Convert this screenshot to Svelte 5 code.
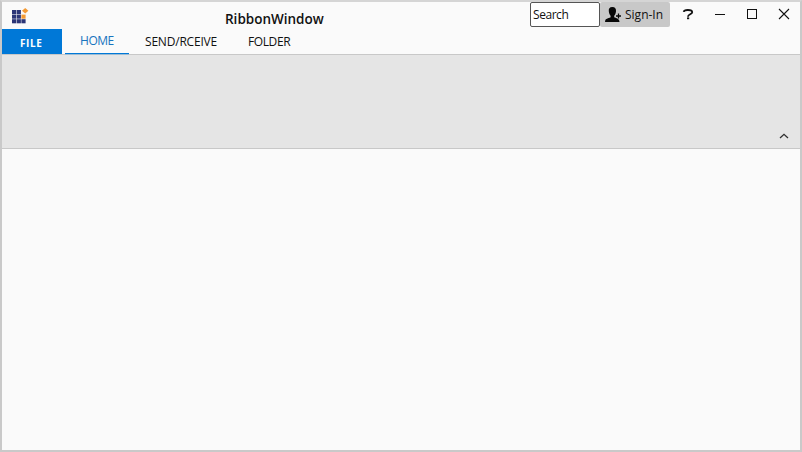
<script>
  const tabs = [
    { label: 'HOME', active: true, cls: 'home' },
    { label: 'SEND/RCEIVE', active: false, cls: 'send' },
    { label: 'FOLDER', active: false, cls: 'folder' }
  ];
  const cells = [0, 1, 2].flatMap((r) => [0, 1, 2].map((c) => ({ r, c })));
</script>

<div class="window">
  <header>
    <svg class="logo" width="18" height="16" viewBox="0 0 18 16">
      {#each cells as { r, c }}
        {#if !(r === 0 && c === 2)}
          <rect x={c * 4.7} y={2 + r * 4.6} width="4.2" height="4.1" fill={r === 1 && c === 2 ? '#f39a35' : '#2b3577'} />
        {/if}
      {/each}
      <path d="M13.2 0 16.4 2.7 13.2 5.5 10 2.7Z" fill="#f39a35" />
    </svg>
    <h1>RibbonWindow</h1>
    <div class="search"><span>Search</span></div>
    <button class="sign">
      <svg width="17" height="16" viewBox="0 0 17 16">
        <path d="M7.3 0C4.5 0 3.5 1.8 3.8 4.3 4 6.6 4.8 8 5.6 8.7v1.5C4.8 11 1 11.3.3 13.2L0 15h14.5c0-2.5-1.2-3.1-5.3-4.8V8.7c.9-.8 1.6-2.1 1.8-4.4C11.2 1.7 10.2 0 7.3 0Z" fill="#080808" />
        <path d="M13.5 6.5v5M11 9h5" stroke="#080808" stroke-width="1.3" />
      </svg>
      <span>Sign-In</span>
    </button>
    <div class="controls">
      <svg viewBox="0 0 32 28"><path d="M11.7 11.9C12 10.3 13.6 10 15.8 10c2.6 0 4.4.6 4.4 2.2 0 2.2-4.2 2-4.2 4.5" fill="none" stroke="#111" stroke-width="1.8" /><rect x="15" y="17.4" width="2.2" height="1.8" fill="#111" /></svg>
      <svg viewBox="0 0 32 28"><path d="M11 14.5h10" stroke="#111" /></svg>
      <svg viewBox="0 0 32 28"><rect x="11.5" y="9.5" width="9" height="9" fill="none" stroke="#111" /></svg>
      <svg viewBox="0 0 32 28"><path d="m11 9 10 10m0-10L11 19" stroke="#111" stroke-width="1.1" /></svg>
    </div>
  </header>
  <nav>
    <button class="file"><span>FILE</span></button>
    {#each tabs as t}
      <button class="tab {t.cls}" class:active={t.active}><span>{t.label}</span></button>
    {/each}
  </nav>
  <section>
    <svg width="10" height="6" viewBox="0 0 10 6"><path d="M1 5 5 1.3 9 5" fill="none" stroke="#303030" stroke-width="1.3" /></svg>
  </section>
  <main></main>
</div>

<style>
  .window {
    box-sizing: border-box;
    width: 802px;
    height: 452px;
    border: 2px solid #c9c9c9;
    border-top-color: #d5d5d5;
    background: #fafafa;
    display: flex;
    flex-direction: column;
    font-family: 'Open Sans', 'Noto Sans', sans-serif;
    font-size: 12px;
    color: #111;
    overflow: hidden;
  }
  header { height: 27px; display: flex; align-items: flex-start; flex: none; }
  .logo { margin: 6px 0 0 10px; flex: none; }
  h1 {
    margin: 8px 0 0 195px;
    width: 305px;
    font-size: 13.5px;
    line-height: 19px;
    font-weight: 600;
    letter-spacing: 0;
  }
  button { border: 0; padding: 0; margin: 0; font: inherit; color: inherit; background: none; text-align: left; }
  span { display: block; white-space: nowrap; }
  .search {
    box-sizing: border-box;
    width: 70px;
    height: 25px;
    flex: none;
    border: 1px solid #555;
    border-radius: 2px;
    background: #fff;
    padding: 4px 0 0 2px;
    line-height: 16px;
    letter-spacing: -0.45px;
  }
  .sign {
    width: 70px;
    height: 25px;
    flex: none;
    background: #c8c8c8;
    border-radius: 2px;
    display: flex;
    align-items: center;
    letter-spacing: 0;
  }
  .sign svg { margin: 0 3px 0 5px; flex: none; }
  .controls { display: flex; flex: none; margin: -2px 0 0 2px; }
  .controls svg { width: 32px; height: 28px; flex: none; }
  nav { display: flex; height: 25px; flex: none; position: relative; z-index: 1; }
  .file {
    width: 60px;
    background: #0078d7;
    color: #fff;
    font-size: 10px;
    font-weight: 700;
    letter-spacing: 0.6px;
    padding: 3px 0 0 18px;
    margin-right: 3px;
  }
  .tab { box-sizing: border-box; height: 25px; display: block; line-height: 16px; padding: 5px 0 4px; }
  .home { width: 64px; padding: 4px 0 4px 15px; margin-right: 16px; letter-spacing: -0.45px; }
  .send { width: 103px; letter-spacing: -0.2px; }
  .folder { letter-spacing: -0.4px; }
  .active { color: #1874be; border-bottom: 1px solid #0078d7; box-shadow: 0 1px #9dbcd3; }
  section {
    box-sizing: border-box;
    height: 95px;
    flex: none;
    border-top: 1px solid #c8c8c8;
    border-bottom: 1px solid #c8c8c8;
    background: #e5e5e5;
    display: flex;
    justify-content: flex-end;
    align-items: flex-end;
    padding: 0 11px 9px 0;
  }
  main { flex: 1; }
</style>
